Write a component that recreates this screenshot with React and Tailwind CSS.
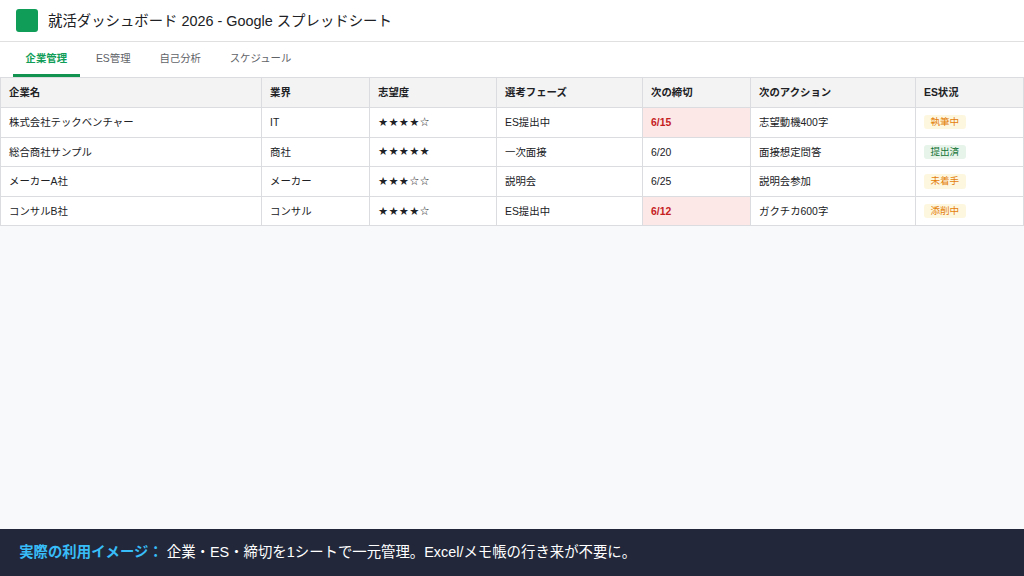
import React, { useState } from 'react';
import clsx from 'clsx';

const tabs = ['企業管理', 'ES管理', '自己分析', 'スケジュール'];

const headers = ['企業名', '業界', '志望度', '選考フェーズ', '次の締切', '次のアクション', 'ES状況'];

const companies = [
  { name: '株式会社テックベンチャー', industry: 'IT', stars: 4, phase: 'ES提出中', deadline: '6/15', urgent: true, action: '志望動機400字', status: '執筆中' },
  { name: '総合商社サンプル', industry: '商社', stars: 5, phase: '一次面接', deadline: '6/20', urgent: false, action: '面接想定問答', status: '提出済' },
  { name: 'メーカーA社', industry: 'メーカー', stars: 3, phase: '説明会', deadline: '6/25', urgent: false, action: '説明会参加', status: '未着手' },
  { name: 'コンサルB社', industry: 'コンサル', stars: 4, phase: 'ES提出中', deadline: '6/12', urgent: true, action: 'ガクチカ600字', status: '添削中' },
];

const baseCell = 'border border-[#dadce0] px-2 text-left whitespace-nowrap';
const cell = clsx(baseCell, 'pt-[1.5px] pb-0');

const StatusBadge = ({ status }) => (
  <span
    className={clsx(
      'block w-fit rounded-[3px] px-[6.4px] h-[14.4px] leading-[14.4px] text-[9.6px]',
      status === '提出済' ? 'bg-[#e6f4ea] text-[#137333]' : 'bg-[#fef7e0] text-[#e37f0a]'
    )}
  >
    {status}
  </span>
);

const App = () => {
  const [activeTab, setActiveTab] = useState(tabs[0]);

  return (
    <div className="h-screen flex flex-col overflow-hidden bg-[#f8f9fa] text-[#202124] font-['Liberation_Sans','Noto_Sans_CJK_JP',sans-serif]">
      <header className="h-[42px] shrink-0 flex items-center gap-[9.6px] px-4 bg-white border-b border-[#e0e0e0]">
        <div className="w-[22.4px] h-[22.4px] rounded-[3px] bg-[#0f9d58]"></div>
        <h1 className="text-[14.4px] leading-5">就活ダッシュボード 2026 - Google スプレッドシート</h1>
      </header>

      <nav className="h-[35px] shrink-0 flex gap-[3.2px] px-[12.8px] bg-white">
        {tabs.map((tab) => (
          <button
            key={tab}
            onClick={() => setActiveTab(tab)}
            className={clsx(
              'px-[12.8px] pt-[1.5px] text-[10.4px] border-b-3',
              tab === activeTab ? 'border-[#12934f] text-[#0f9d58] font-bold' : 'border-transparent text-[#5f6368]'
            )}
          >
            {tab}
          </button>
        ))}
      </nav>

      <table className="w-full table-fixed border-collapse bg-white text-[10.4px] leading-[16px]">
        <colgroup>
          <col className="w-[261px]" />
          <col className="w-[108px]" />
          <col className="w-[127px]" />
          <col className="w-[146px]" />
          <col className="w-[108px]" />
          <col className="w-[165px]" />
          <col />
        </colgroup>
        <thead>
          <tr className="h-[30px] bg-[#f3f3f3]">
            {headers.map((label) => (
              <th key={label} className={clsx(baseCell, 'py-0 font-bold')}>{label}</th>
            ))}
          </tr>
        </thead>
        <tbody>
          {companies.map((c) => (
            <tr key={c.name} className="h-[29.6px]">
              <td className={cell}>{c.name}</td>
              <td className={cell}>{c.industry}</td>
              <td className={clsx(baseCell, 'pt-0 pb-px')}>
                <span className="block pl-[0.5px] text-[9.2px] tracking-[1.2px]">{'★'.repeat(c.stars) + '☆'.repeat(5 - c.stars)}</span>
              </td>
              <td className={cell}>{c.phase}</td>
              <td className={clsx(cell, c.urgent && 'bg-[#fce8e6] text-[#c5221f] font-bold')}>{c.deadline}</td>
              <td className={cell}>{c.action}</td>
              <td className={clsx(baseCell, 'py-0')}><StatusBadge status={c.status} /></td>
            </tr>
          ))}
        </tbody>
      </table>

      <footer className="mt-auto h-[47px] shrink-0 flex items-center px-[19.2px] bg-[#22283a] text-white text-[14.4px]">
        <p>
          <strong className="font-bold text-[#38bdf8]">実際の利用イメージ：</strong> 企業・ES・締切を1シートで一元管理。Excel/メモ帳の行き来が不要に。
        </p>
      </footer>
    </div>
  );
};

export default App;
